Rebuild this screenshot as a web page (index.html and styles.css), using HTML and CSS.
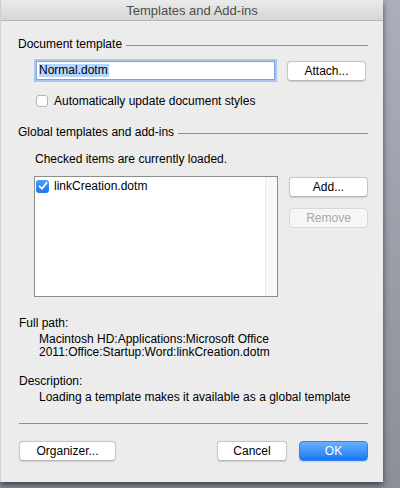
FILE: index.html
```html
<!doctype html>
<html lang="en">
    <head>
        <meta charset="UTF-8" />
        <meta name="viewport" content="width=device-width, initial-scale=1.0" />
        <title>Templates and Add-ins</title>
        <link rel="stylesheet" href="styles.css">
    </head>
    <body>
        <div class="dialog">
            <div class="titlebar">Templates and Add-ins</div>

            <div class="content">
                <!-- Modello documento -->
                <div class="group-head"><span>Document template</span><span class="rule"></span></div>
                <div class="template-row">
                    <div class="field"><span class="selected">Normal.dotm</span></div>
                    <button class="btn attach">Attach...</button>
                </div>
                <label class="check-row">
                    <span class="checkbox"></span>
                    <span>Automatically update document styles</span>
                </label>

                <!-- Modelli globali -->
                <div class="group-head"><span>Global templates and add-ins</span><span class="rule"></span></div>
                <div class="hint">Checked items are currently loaded.</div>
                <div class="list-row">
                    <div class="list">
                        <div class="list-items">
                            <div class="list-item">
                                <span class="checkbox checked">
                                    <svg width="12" height="12" viewBox="0 0 12 12"><path d="M2.6 6.3 L5 8.7 L9.6 2.8" fill="none" stroke="#fff" stroke-width="1.8" stroke-linecap="round" stroke-linejoin="round"/></svg>
                                </span>
                                <span>linkCreation.dotm</span>
                            </div>
                        </div>
                        <div class="scroll-track"></div>
                    </div>
                    <div class="list-buttons">
                        <button class="btn">Add...</button>
                        <button class="btn disabled">Remove</button>
                    </div>
                </div>

                <div class="info-label path-label">Full path:</div>
                <div class="info-text path">Macintosh HD:Applications:Microsoft Office<br>2011:Office:Startup:Word:linkCreation.dotm</div>
                <div class="info-label desc-label">Description:</div>
                <div class="info-text">Loading a template makes it available as a global template</div>

                <div class="separator"></div>
                <div class="footer">
                    <button class="btn organizer">Organizer...</button>
                    <span class="spacer"></span>
                    <button class="btn cancel">Cancel</button>
                    <button class="btn ok">OK</button>
                </div>
            </div>
        </div>
    </body>
</html>
```

FILE: styles.css
```css
body {
    margin: 0;
    height: 488px;
    overflow: hidden;
    font-family: "Liberation Sans", Arial, sans-serif;
    font-size: 12px;
    color: #000;
    background: linear-gradient(to bottom, #abafbb, #8b8f99);
}
.dialog {
    width: 383px;
    height: 482px;
    background-color: #ececec;
    box-shadow: 0 3px 6px rgba(0, 0, 0, 0.55);
    border-left: 1px solid #d0d0d0;
    box-sizing: border-box;
}
.titlebar {
    height: 20px;
    line-height: 21px;
    text-align: center;
    font-size: 13px;
    color: #4d4d4d;
    background: linear-gradient(to bottom, #ebebeb, #d5d5d5);
    border-bottom: 1px solid #b8b8b8;
}
.content {
    padding: 0 15px 0 17px;
}
/* Intestazione di gruppo con la linea a destra */
.group-head {
    display: flex;
    align-items: center;
    line-height: 16px;
    margin-top: 15px;
}
.group-head .rule {
    flex: 1;
    height: 1px;
    background-color: #8e8e8e;
    margin: 3px 0 0 4px;
}
.template-row {
    display: flex;
    align-items: flex-start;
    margin-top: 8px;
    padding-left: 16px;
}
.field {
    width: 239px;
    height: 19px;
    line-height: 15px;
    margin: 1px 2px;
    padding: 1px 1px 1px 2px;
    background-color: #fff;
    border: 1px solid #7aa5df;
    box-shadow: 0 0 0 2px #a9c8f0;
    box-sizing: border-box;
}
.selected {
    background-color: #b3d7ff;
    display: inline-block;
    line-height: 13px;
    padding-right: 1px;
}
.btn {
    font-family: inherit;
    font-size: 12px;
    color: #000;
    height: 20px;
    padding: 0;
    background-color: #fff;
    border: 1px solid #c6c6c6;
    border-bottom-color: #b4b4b4;
    border-radius: 4px;
    box-shadow: 0 0.5px 1px rgba(0, 0, 0, 0.12);
    cursor: pointer;
}
.attach {
    width: 79px;
    margin-left: 10px;
    margin-top: 1px;
}
.check-row {
    display: flex;
    align-items: center;
    gap: 6px;
    margin-top: 12px;
    padding-left: 18px;
    line-height: 16px;
}
.checkbox {
    width: 12px;
    height: 12px;
    box-sizing: border-box;
    border: 1px solid #b3b3b3;
    border-radius: 3px;
    background-color: #fff;
    display: inline-flex;
    align-items: center;
    justify-content: center;
}
.checkbox.checked {
    width: 13px;
    height: 13px;
    border: none;
    background: linear-gradient(to bottom, #4a9bfb, #1c77f3);
}
.hint {
    margin-top: 11px;
    padding-left: 17px;
    line-height: 16px;
}
.list-row {
    display: flex;
    align-items: flex-start;
    margin-top: 9px;
    padding-left: 16px;
}
.list {
    width: 244px;
    height: 121px;
    box-sizing: border-box;
    border: 1px solid #8d8d8d;
    background-color: #fff;
    display: flex;
}
.list-items {
    flex: 1;
    padding: 1px 1px 0 1px;
}
.list-item {
    display: flex;
    align-items: center;
    gap: 5px;
    line-height: 16px;
}
.scroll-track {
    width: 11px;
    background-color: #f8f8f8;
    border-left: 1px solid #ebebeb;
}
.list-buttons {
    display: flex;
    flex-direction: column;
    gap: 11px;
    margin-left: 11px;
    margin-top: 1px;
}
.list-buttons .btn {
    width: 79px;
}
.btn.disabled {
    color: #a9a9a9;
    background-color: #f6f6f6;
    border-color: #d8d8d8;
    box-shadow: none;
}
.info-label {
    line-height: 16px;
    padding-left: 1px;
}
.path-label {
    margin-top: 18px;
}
.info-text {
    padding-left: 21px;
    line-height: 16px;
}
.path {
    line-height: 13px;
    margin-top: 2px;
}
.desc-label {
    margin-top: 14px;
}
.separator {
    height: 1px;
    background-color: #8e8e8e;
    margin: 18px 0 0 1px;
}
.footer {
    display: flex;
    align-items: center;
    gap: 12px;
    margin-top: 17px;
    padding-left: 1px;
}
.spacer {
    flex: 1;
}
.organizer {
    width: 97px;
}
.cancel {
    width: 70px;
}
.ok {
    width: 69px;
    color: #fff;
    border: 1px solid #2d82f4;
    background: linear-gradient(to bottom, #69b1fd, #1a78f6);
}
```
